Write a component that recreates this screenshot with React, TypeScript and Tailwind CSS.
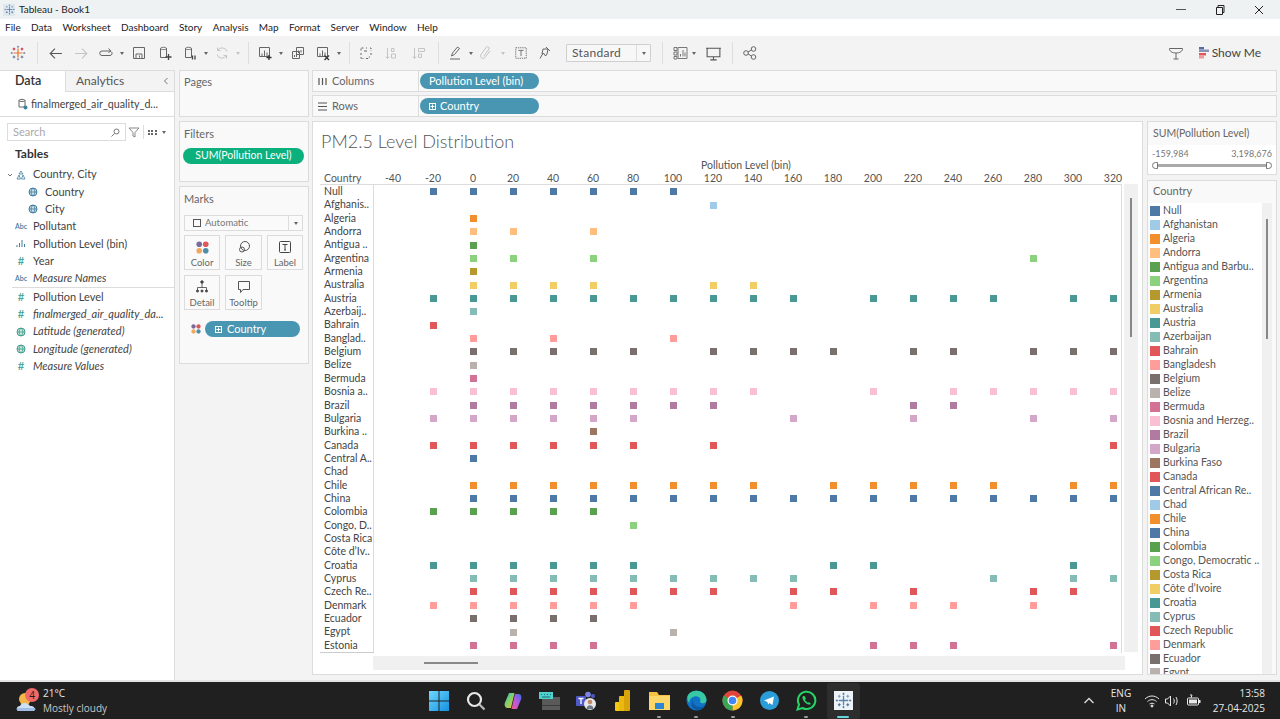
import React from "react";

const C = {
  blue: "#4e79a7", lblue: "#a0cbe8", orange: "#f28e2b", lorange: "#ffbe7d", green: "#59a14f", lgreen: "#8cd17d",
  olive: "#b6992d", yellow: "#f1ce63", teal: "#499894", lteal: "#86bcb6", red: "#e15759", pink: "#ff9d9a",
  gray: "#79706e", lgray: "#bab0ac", rose: "#d37295", lrose: "#fabfd2", purple: "#b07aa1", lpurple: "#d4a6c8", brown: "#9d7660",
};

const rows: [string, string, string, number[]][] = [
  ["Null", "Null", C.blue, [-20, 0, 20, 40, 60, 80, 100]],
  ["Afghanis..", "Afghanistan", C.lblue, [120]],
  ["Algeria", "Algeria", C.orange, [0]],
  ["Andorra", "Andorra", C.lorange, [0, 20, 60]],
  ["Antigua ..", "Antigua and Barbu..", C.green, [0]],
  ["Argentina", "Argentina", C.lgreen, [0, 20, 60, 280]],
  ["Armenia", "Armenia", C.olive, [0]],
  ["Australia", "Australia", C.yellow, [0, 20, 40, 60, 120, 140]],
  ["Austria", "Austria", C.teal, [-20, 0, 20, 40, 60, 80, 100, 120, 140, 160, 200, 220, 240, 260, 300, 320]],
  ["Azerbaij..", "Azerbaijan", C.lteal, [0]],
  ["Bahrain", "Bahrain", C.red, [-20]],
  ["Banglad..", "Bangladesh", C.pink, [0, 40, 100]],
  ["Belgium", "Belgium", C.gray, [0, 20, 40, 60, 80, 120, 140, 160, 180, 220, 240, 280, 300, 320]],
  ["Belize", "Belize", C.lgray, [0]],
  ["Bermuda", "Bermuda", C.rose, [0]],
  ["Bosnia a..", "Bosnia and Herzeg..", C.lrose, [-20, 0, 20, 40, 60, 80, 100, 120, 140, 200, 240, 260, 280, 300, 320]],
  ["Brazil", "Brazil", C.purple, [0, 20, 40, 60, 80, 100, 120, 220, 240]],
  ["Bulgaria", "Bulgaria", C.lpurple, [-20, 0, 20, 40, 60, 80, 160, 220, 280, 320]],
  ["Burkina ..", "Burkina Faso", C.brown, [60]],
  ["Canada", "Canada", C.red, [-20, 0, 20, 40, 60, 80, 120, 320]],
  ["Central A..", "Central African Re..", C.blue, [0]],
  ["Chad", "Chad", C.lblue, []],
  ["Chile", "Chile", C.orange, [0, 20, 40, 60, 80, 100, 120, 140, 180, 200, 220, 240, 260, 300, 320]],
  ["China", "China", C.blue, [0, 20, 40, 60, 80, 100, 120, 140, 160, 180, 200, 220, 240, 260, 280, 300, 320]],
  ["Colombia", "Colombia", C.green, [-20, 0, 20, 40, 60]],
  ["Congo, D..", "Congo, Democratic ..", C.lgreen, [80]],
  ["Costa Rica", "Costa Rica", C.olive, []],
  ["Côte d’Iv..", "Côte d’Ivoire", C.yellow, []],
  ["Croatia", "Croatia", C.teal, [-20, 0, 20, 40, 60, 80, 180, 200, 300]],
  ["Cyprus", "Cyprus", C.lteal, [0, 20, 40, 60, 80, 100, 120, 140, 160, 260, 300, 320]],
  ["Czech Re..", "Czech Republic", C.red, [0, 20, 40, 60, 80, 100, 120, 160, 180, 220, 280, 300]],
  ["Denmark", "Denmark", C.pink, [-20, 0, 20, 40, 60, 80, 160, 200, 220, 240, 280]],
  ["Ecuador", "Ecuador", C.gray, [0, 20, 40, 60]],
  ["Egypt", "Egypt", C.lgray, [20, 100]],
  ["Estonia", "Estonia", C.rose, [0, 20, 40, 60, 200, 220, 240, 320]],
];
const ticks = Array.from({ length: 19 }, (_, i) => -40 + i * 20);

const Ic = ({ children, s = 16, c = "#666" }: { children: React.ReactNode; s?: number; c?: string }) => (
  <svg width={s} height={s} viewBox="0 0 16 16" fill="none" stroke={c} strokeWidth="1">{children}</svg>
);
const Caret = ({ w = "w-[8px]", c = "border-t-[#666]" }: { w?: string; c?: string }) => (
  <div className={`${w} flex justify-center`}>
    <div className={`w-0 h-0 border-l-[2.5px] border-r-[2.5px] border-t-[3px] border-l-transparent border-r-transparent ${c}`} />
  </div>
);
const Sep = ({ m }: { m: string }) => <div className={`w-px h-[22px] bg-[#dddddd] ${m}`} />;
const Slot = ({ w, children, m = "" }: { w: string; children: React.ReactNode; m?: string }) => (
  <div className={`${w} ${m} flex justify-center items-center`}>{children}</div>
);

const TabLogo = ({ s = 18, mono = false }: { s?: number; mono?: boolean }) => {
  const a = mono ? "#5b84b1" : "#e8762d";
  const b = mono ? "#3f6c9a" : "#5b6f9b";
  const d = mono ? "#7a9cc0" : "#c72037";
  return (
    <svg width={s} height={s} viewBox="0 0 18 18" fill="none" strokeWidth="1.1">
      <path d="M9 4v10M4 9h10" stroke={a} strokeWidth="1.400" />
      <path d="M4.500 3v3M3 4.500h3M13.500 3v3M12 4.500h3" stroke={d} />
      <path d="M4.500 12v3M3 13.500h3M13.500 12v3M12 13.500h3" stroke={b} />
      <path d="M9 .8v2.400M7.800 2h2.400M9 14.800v2.400M7.800 16h2.400M.8 9h2.400M2 7.800v2.400M14.800 9h2.400M16 7.800v2.400" stroke={b} strokeWidth=".8" />
    </svg>
  );
};

const Db = ({ extra }: { extra: React.ReactNode }) => (
  <Ic>
    <path d="M3.500 3.500c0-1.600 6-1.600 6 0v9h-6zM3.500 3.500c0 1.400 6 1.400 6 0" />
    {extra}
  </Ic>
);

function Toolbar() {
  const g = "#c4c4c4";
  return (
    <div className="h-[34px] bg-[#f3f3f3] flex items-center pl-[6px]">
      <Slot w="w-[24px]"><TabLogo s={16} /></Slot>
      <Sep m="ml-[7px]" />
      <Slot w="w-[26px]" m="ml-[4px]"><Ic s={17}><path d="M14 8H3M7.500 3.500 3 8l4.500 4.500" stroke="#555" /></Ic></Slot>
      <Slot w="w-[26px]"><Ic s={17} c={g}><path d="M2 8h11M8.500 3.500 13 8l-4.500 4.500" /></Ic></Slot>
      <Slot w="w-[24px]"><Ic><path d="M13 6H4a2.200 2.200 0 0 0 0 4.500h8a2.200 2.200 0 0 0 1.500-3.700M10.500 3.500 13 6l-2.500 1.500" /></Ic></Slot>
      <Caret />
      <Slot w="w-[26px]"><Ic><path d="M2.500 2.500h11v11h-11zM5 13.500V9h6v4.500M8.500 10.500v2" /></Ic></Slot>
      <Slot w="w-[26px]"><Db extra={<path d="M11.500 9v6M8.500 12h6" stroke="#444" strokeWidth="1.300" />} /></Slot>
      <Slot w="w-[24px]"><Db extra={<path d="M10.500 10.500v4M13 10.500v4" stroke="#444" strokeWidth="1.300" />} /></Slot>
      <Caret />
      <Slot w="w-[24px]"><Ic c={g}><path d="M13 6.500A5.200 5.200 0 0 0 3.500 5.500M3 9.500a5.200 5.200 0 0 0 9.500 1M3.500 2.500v3h3M12.500 13.500v-3h-3" /></Ic></Slot>
      <Caret c="border-t-[#c4c4c4]" />
      <Sep m="ml-[6px]" />
      <Slot w="w-[24px]" m="ml-[4px]"><Ic><path d="M2.500 2.500h10v9h-10zM5 11.500v-3M7.500 11.500v-6M10 11.500v-4" /><path d="M12 10v5M9.500 12.500h5" stroke="#333" strokeWidth="1.300" /></Ic></Slot>
      <Caret />
      <Slot w="w-[26px]"><Ic><path d="M6.500 2.500h7v7h-7zM2.500 6.500h7v7h-7zM4.500 12v-2M6.500 12V8.500M8.500 8V5.500M11 7.500V5" /></Ic></Slot>
      <Slot w="w-[24px]"><Ic><path d="M2.500 2.500h10v9h-10zM5 11.500v-3M7.500 11.500v-6M10 11.500v-4" /><path d="m9.500 10.500 4.500 4.500m0-4.500-4.500 4.500" stroke="#333" strokeWidth="1.300" /></Ic></Slot>
      <Caret />
      <Sep m="ml-[6px]" />
      <Slot w="w-[32px]"><Ic><path d="M3 5.500v-2.500h2.500M8 3h1M12 3h1v2.500M13 8v2M3 8v2M3 12v1.500h2.500M8 13.500h2l2-2" strokeDasharray="2 1" /><path d="M6 6h3" /></Ic></Slot>
      <Slot w="w-[20px]"><Ic c={g}><path d="M3.500 3v10M1.800 11.500 3.500 13.500l1.700-2M7.500 3.500h2.500v3h-2.500zM7.500 9h4v4h-4z" /></Ic></Slot>
      <Slot w="w-[34px]"><Ic c={g}><path d="M3.500 3v10M1.800 11.500 3.500 13.500l1.700-2M7.500 3.500h6v3h-6zM7.500 9h3v3.500h-3z" /></Ic></Slot>
      <Sep m="ml-[2px]" />
      <Slot w="w-[24px]" m="ml-[4px]"><Ic><path d="m4.500 11 1-3 5-6 2 1.500-5 6zM3 14h10" /></Ic></Slot>
      <Caret w="w-[7px]" />
      <Slot w="w-[24px]"><Ic c={g}><path d="M5.500 11.500 11 4a1.700 1.700 0 0 0-2.600-2L3 9.500a2.500 2.500 0 0 0 4 3L12 6" /></Ic></Slot>
      <Caret w="w-[10px]" c="border-t-[#c4c4c4]" />
      <Slot w="w-[26px]"><Ic s={14}><path d="M2 2h12v12H2z" strokeDasharray="1.500 1" /><path d="M5 5h6M8 5v6.500" /></Ic></Slot>
      <Slot w="w-[22px]"><Ic><path d="m5 9 1-5h5l-1 5-1.500 2L7 8.500zM9 2l4 4M5.500 9 3 13.500" /></Ic></Slot>
      <div className="ml-[10px] w-[85px] h-[18px] bg-[#f7f7f7] border border-[#cfcfcf] flex items-center justify-between text-[#555] text-[12px] tracking-[0.3px] rounded-[1px]">
        <span className="pl-[5px]">Standard</span>
        <div className="w-[14px] h-full border-l border-[#dddddd] flex items-center justify-center"><Caret /></div>
      </div>
      <Sep m="ml-[11px]" />
      <Slot w="w-[22px]" m="ml-[6px]"><Ic><path d="M2 2.500h3v3H2zM2 7h3v3H2zM2 11.500h3v2.500H2zM6 2.500h9v11H6zM8.500 11.500V9M11 11.500V5M13 11.500V7.500" stroke="#777" /></Ic></Slot>
      <Caret w="w-[6px]" />
      <Slot w="w-[32px]"><Ic s={17}><path d="M2 3h12v8H2zM1 3h14M8 11v3M5 14h6" stroke="#555" /></Ic></Slot>
      <Sep m="ml-[3px]" />
      <Slot w="w-[34px]"><Ic><circle cx="4" cy="8" r="2.300" /><circle cx="11.500" cy="4" r="2.300" /><circle cx="11.500" cy="12" r="2.300" /><path d="m6 7 3.500-2M6 9l3.500 2" /></Ic></Slot>
      <div className="flex-1" />
      <Ic s={16}><path d="M1.500 3.500h13c.3 2.500-2.500 4.500-6.500 4.500s-6.800-2-6.500-4.500zM8 8v6M5.500 14h5" stroke="#666" /></Ic>
      <div className="ml-[15px] flex items-center mr-[19px]">
        <svg width="11" height="12" viewBox="0 0 11 12" className="mr-[2px]">
          <rect x="0" y="0" width="5" height="2.500" fill="#5a6b9d" />
          <rect x="0" y="2.500" width="10" height="2.500" fill="#8a93b8" />
          <rect x="0" y="6" width="7" height="2.500" fill="#e15759" />
          <rect x="0" y="9" width="5" height="2.500" fill="#ef9a9a" />
        </svg>
        <span className="text-[12px] text-[#444]">Show Me</span>
      </div>
    </div>
  );
}

const DType = ({ t }: { t: string }) => {
  if (t === "abc") return <span className="text-[7px] text-[#3f7f9f] font-semibold">Abc</span>;
  if (t === "hash") return <span className="text-[12px] leading-none text-[#3f9f8c]">#</span>;
  if (t === "bin")
    return (
      <svg width="10" height="9" viewBox="0 0 10 9"><path d="M1 8V6M3.500 8V4M6 8V1M8.500 8V5" stroke="#3f7f9f" /></svg>
    );
  const c = t === "globeg" ? "#3f9f8c" : "#3f7f9f";
  return (
    <svg width="10" height="10" viewBox="0 0 10 10" fill="none" stroke={c}>
      <circle cx="5" cy="5" r="4" fill={c} fillOpacity=".25" />
      <path d="M1 5h8M5 1c-2.500 2.500-2.500 5.500 0 8M5 1c2.500 2.500 2.500 5.500 0 8" strokeWidth=".8" />
    </svg>
  );
};

const Field = ({ t, label, italic, sub }: { t: string; label: string; italic?: boolean; sub?: boolean }) => (
  <div className={`h-[17.33px] flex items-center ${sub ? "pl-[28px]" : "pl-[16px]"}`}>
    <div className={`w-[10px] flex justify-center`}><DType t={t} /></div>
    <span className={`ml-[7px] whitespace-nowrap ${italic ? "italic" : ""}`}>{label}</span>
  </div>
);

function DataPane() {
  return (
    <div className="w-[175px] h-full bg-white border-r border-[#dcdcdc] text-[11px] text-[#444] flex flex-col shrink-0 border-t border-t-[#dcdcdc]">
      <div className="h-[21px] flex text-[12px] shrink-0">
        <div className="w-[65px] flex items-center pl-[15px] font-semibold text-[#333] text-[12.5px]">Data</div>
        <div className="flex-1 bg-[#f3f3f3] border-b border-l border-[#dcdcdc] flex items-center pl-[10px] text-[#555] justify-between pr-[5px]">
          <span>Analytics</span>
          <svg width="6" height="8" viewBox="0 0 6 8" fill="none" stroke="#777"><path d="M4.500 1 1.500 4l3 3" /></svg>
        </div>
      </div>
      <div className="h-[25px] flex items-center pl-[18px] border-b border-[#dcdcdc] shrink-0 gap-[3px]">
        <svg width="10" height="12" viewBox="0 0 10 12" fill="none" stroke="#666">
          <path d="M1 2.500c0-1.500 6-1.500 6 0V9H1zM1 2.500c0 1.300 6 1.300 6 0" />
          <circle cx="7.500" cy="9.500" r="2" fill="#3f7f9f" stroke="none" />
        </svg>
        <span className="text-[10.7px]">finalmerged_air_quality_d...</span>
      </div>
      <div className="flex items-center h-[18px] mt-[6px] ml-[7px] shrink-0">
        <div className="w-[119px] h-full border border-[#dcdcdc] flex items-center justify-between px-[5px] text-[#aaa]">
          <span>Search</span>
          <svg width="9" height="9" viewBox="0 0 9 9" fill="none" stroke="#777"><circle cx="5.500" cy="3.500" r="2.500" /><path d="m3.500 5.500-3 3" /></svg>
        </div>
        <svg width="12" height="11" viewBox="0 0 12 11" fill="none" stroke="#888" className="ml-[2px]"><path d="M1 1h10L7 5.500V10L5 9V5.500z" /></svg>
        <div className="w-px h-[14px] bg-[#dddddd] ml-[3px]" />
        <div className="ml-[4px] grid grid-cols-3 gap-[1px] w-[9px]">
          {Array.from({ length: 6 }, (_, i) => <div key={i} className="w-[2px] h-[2px] bg-[#666]" />)}
        </div>
        <div className="ml-[4px]"><Caret w="w-[6px]" /></div>
      </div>
      <div className="mt-[4px] pl-[15px] text-[12px] font-bold text-[#333] h-[17px] flex items-center shrink-0">Tables</div>
      <div className="mt-[4px]">
        <div className="h-[17.33px] flex items-center pl-[7px]">
          <svg width="6" height="6" viewBox="0 0 6 6" fill="none" stroke="#777"><path d="m1 2 2 2 2-2" /></svg>
          <svg width="10" height="10" viewBox="0 0 10 10" fill="none" stroke="#3f7f9f" className="ml-[3px]"><path d="M5 1 3 4h4zM3 5 1 9h3.500zM7 5l2 4H5.500z" strokeWidth=".8" /></svg>
          <span className="ml-[7px]">Country, City</span>
        </div>
        <Field t="globe" label="Country" sub />
        <Field t="globe" label="City" sub />
        <Field t="abc" label="Pollutant" />
        <Field t="bin" label="Pollution Level (bin)" />
        <Field t="hash" label="Year" />
        <Field t="abc" label="Measure Names" italic />
      </div>
      <div className="h-px bg-[#dcdcdc] ml-[12px] shrink-0" />
      <Field t="hash" label="Pollution Level" />
      <Field t="hash" label="finalmerged_air_quality_da..." italic />
      <Field t="globeg" label="Latitude (generated)" italic />
      <Field t="globeg" label="Longitude (generated)" italic />
      <Field t="hash" label="Measure Values" italic />
    </div>
  );
}

const Dots = ({ s = 12 }: { s?: number }) => (
  <svg width={s} height={s} viewBox="0 0 12 12">
    <circle cx="3" cy="3" r="2.600" fill="#7b6a9c" />
    <circle cx="9" cy="3" r="2.600" fill="#e15759" />
    <circle cx="3" cy="9" r="2.600" fill="#f2a65e" />
    <circle cx="9" cy="9" r="2.600" fill="#4e8fa7" />
  </svg>
);

const MarkBtn = ({ label, children }: { label: string; children: React.ReactNode }) => (
  <div className="h-[35px] border border-[#dcdcdc] bg-[#fafafa] flex flex-col items-center pt-[4px] text-[#666] text-[9.5px] gap-[3px]">
    <div className="h-[14px] flex items-center">{children}</div>
    <span className="leading-[12px]">{label}</span>
  </div>
);

const Plus = () => (
  <div className="w-[7px] h-[7px] border border-white flex items-center justify-center text-white text-[7px] leading-none">
    <svg width="5" height="5" viewBox="0 0 5 5" stroke="#fff" strokeWidth="1"><path d="M2.500 .5v4M.5 2.500h4" /></svg>
  </div>
);

function Middle() {
  const card = "bg-[#f9f9f9] border border-[#dcdcdc] px-[4px] text-[11px] text-[#666]";
  return (
    <div className="w-[130px] h-full ml-[4px] flex flex-col gap-[4px] shrink-0">
      <div className={`${card} h-[47px] pt-[3px]`}>Pages</div>
      <div className={`${card} h-[61px] pt-[4px]`}>
        <div className="h-[13px]">Filters</div>
        <div className="mt-[9px] -ml-[1px] h-[16px] w-[121px] rounded-full bg-[#0bb07d] text-white flex items-center justify-center text-[10.5px]">SUM(Pollution Level)</div>
      </div>
      <div className={`${card} h-[178px] pt-[4px]`}>
        <div className="h-[13px]">Marks</div>
        <div className="mt-[11px] h-[16px] w-[119px] border border-[#dcdcdc] bg-[#fafafa] flex items-center text-[9.5px]">
          <div className="w-[8px] h-[8px] border border-[#555] ml-[8px]" />
          <span className="ml-[4px] flex-1 text-[#777]">Automatic</span>
          <div className="w-[14px] h-full border-l border-[#dcdcdc] flex items-center justify-center"><Caret w="w-[6px]" /></div>
        </div>
        <div className="mt-[4px] grid grid-cols-[36px_37px_36px] gap-x-[5px] gap-y-[5px] w-[119px]">
          <MarkBtn label="Color"><Dots s={13} /></MarkBtn>
          <MarkBtn label="Size">
            <svg width="14" height="14" viewBox="0 0 14 14" fill="none" stroke="#555"><circle cx="8" cy="6" r="4.500" /><circle cx="5" cy="9.500" r="2.500" /></svg>
          </MarkBtn>
          <MarkBtn label="Label">
            <svg width="12" height="12" viewBox="0 0 12 12" fill="none" stroke="#444"><rect x=".5" y=".5" width="11" height="11" rx="1" /><path d="M3.500 3.500h5M6 3.500v5.500M5 9h2" /></svg>
          </MarkBtn>
          <MarkBtn label="Detail">
            <svg width="14" height="14" viewBox="0 0 14 14" fill="#444" stroke="#444" strokeWidth=".8"><circle cx="7" cy="2" r="1.300" /><path d="M7 3v5M2.500 10V7.500h9V10" fill="none" /><circle cx="2.500" cy="11" r="1.100" /><circle cx="7" cy="11" r="1.100" /><circle cx="11.500" cy="11" r="1.100" /></svg>
          </MarkBtn>
          <MarkBtn label="Tooltip">
            <svg width="14" height="14" viewBox="0 0 14 14" fill="none" stroke="#555"><path d="M1.500 1.500h11v8H6l-2.500 3v-3h-2z" /></svg>
          </MarkBtn>
        </div>
        <div className="mt-[11px] flex items-center">
          <div className="ml-[7px]"><Dots s={10} /></div>
          <div className="ml-[4px] w-[95px] h-[16px] rounded-full bg-[#4996b2] text-white flex items-center pl-[10px] gap-[4px] text-[11px]">
            <Plus /><span className="ml-[1px]">Country</span>
          </div>
        </div>
      </div>
    </div>
  );
}

const Shelf = ({ icon, label, pill }: { icon: React.ReactNode; label: string; pill: React.ReactNode }) => (
  <div className="h-[22px] bg-[#f9f9f9] border border-[#dcdcdc] flex items-center text-[11px] text-[#666]">
    <div className="w-[106px] h-full border-r border-[#dcdcdc] flex items-center pl-[5px] gap-[5px] shrink-0">
      {icon}<span>{label}</span>
    </div>
    <div className="ml-[1px] w-[119px] h-[16px] rounded-full bg-[#4996b2] text-white flex items-center pl-[9px] text-[11px]">{pill}</div>
  </div>
);

function Chart() {
  return (
    <div className="w-[831px] h-[554px] bg-white border border-[#dcdcdc] pl-[7px] flex flex-col overflow-hidden shrink-0 text-[#555]">
      <div className="h-[37px] pt-[7px] pl-[1px] text-[18px] leading-[24px] font-light text-[#555] shrink-0">PM2.5 Level Distribution</div>
      <div className="h-[12px] text-[10.5px] leading-[12px] text-[#555] shrink-0 pl-[381px]">Pollution Level (bin)</div>
      <div className="flex h-[13px] text-[10.5px] shrink-0 w-[820px] overflow-hidden">
        <div className="w-[53px] pl-[4px] shrink-0 leading-[14px]">Country</div>
        <div className="grid grid-cols-[repeat(19,40px)] shrink-0">
          {ticks.map((t) => <div key={t} className="text-center leading-[14px]">{t}</div>)}
        </div>
      </div>
      <div className="flex shrink-0">
        <div className="w-[802px] border-t border-[#dcdcdc] border-r overflow-hidden shrink-0">
          {rows.map(([s, , color, vals]) => (
            <div key={s} className="flex h-[13.35px]">
              <div className="w-[54px] shrink-0 pl-[4px] border-r border-[#dcdcdc] text-[10.5px] leading-[13.35px] whitespace-nowrap text-[#444] overflow-hidden">{s}</div>
              <div className="grid grid-cols-[repeat(19,40px)] shrink-0 -ml-[1px]">
                {ticks.map((t) => (
                  <div key={t} className="flex items-center justify-center">
                    {vals.includes(t) && <div className="w-[7px] h-[7px]" style={{ backgroundColor: color }} />}
                  </div>
                ))}
              </div>
            </div>
          ))}
          <div className="w-[54px] h-px bg-[#cccccc]" />
        </div>
        <div className="ml-[2px] w-[14px] bg-[#f0f0f0] flex justify-center pt-[14px] mb-[1px]">
          <div className="w-[2px] h-[139px] bg-[#888]" />
        </div>
      </div>
      <div className="ml-[53px] mt-[3px] w-[752px] h-[14px] bg-[#f0f0f0] flex items-center pl-[51px] shrink-0">
        <div className="w-[54px] h-[2px] bg-[#888]" />
      </div>
    </div>
  );
}

function Legend() {
  return (
    <div className="w-[130px] h-full flex flex-col gap-[5px] shrink-0 text-[11px] text-[#666]">
      <div className="h-[54px] bg-[#f9f9f9] border border-[#dcdcdc] shrink-0">
        <div className="h-[23px] pl-[5px] pt-[4px] text-[10.5px]">SUM(Pollution Level)</div>
        <div className="bg-white h-[29px]">
          <div className="flex justify-between px-[4px] text-[9px] text-[#777] pt-[2px]"><span>-159,984</span><span>3,198,676</span></div>
          <div className="flex items-center mx-[4px] mt-[1px]">
            <div className="w-[6px] h-[7px] border border-[#777] rounded-l-full bg-white" />
            <div className="flex-1 h-[3px] bg-[#aaaaaa]" />
            <div className="w-[6px] h-[7px] border border-[#777] rounded-r-full bg-white" />
          </div>
        </div>
      </div>
      <div className="h-[495px] bg-[#f9f9f9] border border-[#dcdcdc] overflow-hidden shrink-0 flex flex-col">
        <div className="h-[22px] pl-[5px] pt-[2px] shrink-0">Country</div>
        <div className="flex flex-1 overflow-hidden">
          <div className="w-[113px] ml-[1px] bg-white overflow-hidden shrink-0 pt-[1px]">
            {rows.map(([s, full, color]) => (
              <div key={s} className="h-[14px] flex items-center shrink-0 pl-[1px]">
                <div className="w-[10px] h-[10px] shrink-0" style={{ backgroundColor: color }} />
                <span className="ml-[3px] whitespace-nowrap text-[10.5px] text-[#555]">{full}</span>
              </div>
            ))}
          </div>
          <div className="w-[10px] bg-[#f0f0f0] flex justify-center pt-[16px]">
            <div className="w-[2px] h-[120px] bg-[#888]" />
          </div>
        </div>
      </div>
    </div>
  );
}

function TaskIcons() {
  const items: React.ReactNode[] = [
    <svg key="w" width="20" height="20" viewBox="0 0 20 20"><defs><linearGradient id="wg" x1="0" y1="0" x2="1" y2="1"><stop offset="0" stopColor="#6fd8ff" /><stop offset="1" stopColor="#1490e0" /></linearGradient></defs><path d="M0 0h9.500v9.500H0zM10.500 0H20v9.500h-9.500zM0 10.500h9.500V20H0zM10.500 10.500H20V20h-9.500z" fill="url(#wg)" /></svg>,
    <svg key="s" width="20" height="20" viewBox="0 0 20 20" fill="none" stroke="#e8e8e8" strokeWidth="2.200"><circle cx="8.500" cy="8.500" r="6.500" /><path d="m13.500 13.500 5 5" stroke="#bbb" /></svg>,
    <svg key="c" width="20" height="20" viewBox="0 0 20 20"><defs><linearGradient id="cg" x1="0" y1="0" x2="1" y2="1"><stop offset="0" stopColor="#2fa8e8" /><stop offset=".45" stopColor="#7ed36a" /><stop offset="1" stopColor="#f5b53a" /></linearGradient><linearGradient id="cg2" x1="1" y1="0" x2="0" y2="1"><stop offset="0" stopColor="#3a6ce8" /><stop offset=".5" stopColor="#b85ae0" /><stop offset="1" stopColor="#f0588a" /></linearGradient></defs><path d="M6 2h5.500L8 17H4.500C2 17 1 14 2 11.500z" fill="url(#cg)" /><path d="M14 18H8.500L12 3h3.500c2.500 0 3.500 3 2.500 5.500z" fill="url(#cg2)" /></svg>,
    <svg key="k" width="21" height="18" viewBox="0 0 21 18"><rect x="3" y="5" width="18" height="13" fill="#5a5a5a" /><rect x="0" y="0" width="14" height="7" fill="#4ed1cf" /><path d="M2 2.500h1M5 2.500h1M8 2.500h1M11 2.500h1M3 5h8" stroke="#1b6a6a" /><rect x="3" y="13" width="18" height="1" fill="#3a3a3a" /></svg>,
    <svg key="t" width="21" height="20" viewBox="0 0 21 20"><circle cx="12" cy="3.500" r="2.800" fill="#7b83eb" /><circle cx="17" cy="5" r="2" fill="#5059c9" /><rect x="0" y="5" width="10" height="10" rx="1" fill="#5059c9" /><path d="M2.500 7.500h5M5 7.500v5.500" stroke="#fff" strokeWidth="1.300" /><circle cx="14" cy="13" r="6" fill="#e8e8e8" /><circle cx="14" cy="11" r="2.300" fill="#c08a6a" /><path d="M10.500 18c0-5 7-5 7 0z" fill="#6a7a8a" /></svg>,
    <svg key="p" width="15" height="21" viewBox="0 0 15 21"><rect x="0" y="12" width="5" height="9" rx="1" fill="#f2c811" /><rect x="4" y="6" width="6" height="15" rx="1" fill="#e9b911" /><rect x="9" y="0" width="6" height="21" rx="1" fill="#d9a30a" /></svg>,
    <svg key="f" width="21" height="18" viewBox="0 0 21 18"><path d="M0 0h8l2 3h11v14H0z" fill="#f5c242" /><rect x="0" y="4" width="21" height="14" fill="#fbd668" /><rect x="6" y="11" width="9" height="6" fill="#2b86d6" /></svg>,
    <svg key="e" width="21" height="21" viewBox="0 0 21 21"><circle cx="10.500" cy="10.500" r="10" fill="#1173c8" /><path d="M2 5C7-2 20 0 20.500 10c0 4-5 4-6.500 2 2-4-3-7-7-5C4 8.500 3 11 3.500 13 1 11 1 7 2 5z" fill="#37c9a4" /><path d="M7 10c-1 5 5 9 12 6-3 5-9 5-12 2-2-2-2-5 0-8z" fill="#0c59a4" /></svg>,
    <svg key="ch" width="21" height="21" viewBox="0 0 21 21"><circle cx="10.500" cy="10.500" r="10" fill="#e0453a" /><path d="M10.500 10.500 1.800 15.500a10 10 0 0 0 9 5z" fill="#3aa757" /><path d="M10.500 10.500l8.700-5a10 10 0 0 1-8.400 15z" fill="#f8c52c" /><path d="M1.800 15.500 10.500 10.500l-8.700-5a10 10 0 0 0 0 10z" fill="#3aa757" /><circle cx="10.500" cy="10.500" r="5" fill="#fff" /><circle cx="10.500" cy="10.500" r="3.800" fill="#4285f4" /></svg>,
    <svg key="tg" width="19" height="19" viewBox="0 0 19 19"><circle cx="9.500" cy="9.500" r="9.500" fill="#2a9dd8" /><path d="M4 9.500 14 5.500l-1.500 8.500-3-2-1.500 1.500-.5-2.500z" fill="#fff" /></svg>,
    <svg key="wa" width="21" height="21" viewBox="0 0 21 21" fill="none"><path d="M1.500 19.500 3 14.500A8.700 8.700 0 1 1 6.500 18z" stroke="#25d366" strokeWidth="2" /><path d="M7 6c-1.500 2 .5 5 2 6.500s4.500 3 6 1.500l-2-2-1 .8c-1-.3-2.500-1.800-3-3l1-1-1.500-2.800z" fill="#25d366" /></svg>,
  ];
  return (
    <div className="flex items-center h-full">
      {items.map((n, i) => (
        <div key={i} className="w-[36.7px] h-full flex items-center justify-center relative">
          {n}
          {i >= 6 && i !== 9 && <div className="absolute bottom-[1px] w-[4px] h-[2px] rounded-full bg-[#9a9a9a]" />}
        </div>
      ))}
      <div className="w-[33px] h-[36px] bg-[#2d2d2d] rounded-[3px] flex items-center justify-center relative ml-[2px]">
        <div className="w-[19px] h-[19px] bg-[#eef3f7] flex items-center justify-center"><TabLogo s={17} mono /></div>
        <div className="absolute bottom-[1px] w-[12px] h-[2px] rounded-full bg-[#67d3dc]" />
      </div>
    </div>
  );
}

function Taskbar() {
  return (
    <div className="h-[39px] bg-[#202020] border-t-2 border-[#e4e4e4] flex items-center text-[#e8e8e8] font-['Open_Sans',sans-serif] shrink-0">
      <div className="w-[421px] flex items-center pl-[16px] shrink-0 h-full">
        <div className="relative w-[22px] h-[24px]">
          <svg width="22" height="24" viewBox="0 0 22 24" className="mt-[1px]">
            <circle cx="9" cy="9" r="6" fill="#f2b64a" />
            <path d="M3 21c-3 0-3-5 1-5 1-4 8-4 10 0 5-1 6 5 2 5z" fill="#cfe0f5" />
            <path d="M3 21c-2 0-3-2-2-3h18c1 1 0 3-2 3z" fill="#9fbde6" />
          </svg>
          <div className="absolute top-[-1px] left-[9px] w-[14px] h-[14px] rounded-full bg-[#f0696a] text-[#1d1d1d] text-[10px] leading-[14px] text-center">4</div>
        </div>
        <div className="ml-[5px] text-[10px] leading-[15px]">
          <div>21°C</div>
          <div className="text-[#c8c8c8]">Mostly cloudy</div>
        </div>
      </div>
      <TaskIcons />
      <div className="flex-1" />
      <svg width="12" height="8" viewBox="0 0 12 8" fill="none" stroke="#ddd" strokeWidth="1.300"><path d="m1.500 6 4.500-4.500L10.500 6" /></svg>
      <div className="ml-[14px] w-[24px] text-center text-[10px] leading-[15px]"><div>ENG</div><div>IN</div></div>
      <svg width="16" height="14" viewBox="0 0 16 14" fill="none" stroke="#e8e8e8" className="ml-[11px]"><path d="M1 5c4-4 10-4 14 0M3.500 7.500c3-2.500 6-2.500 9 0M5.500 10c1.500-1 3.500-1 5 0" /><circle cx="8" cy="12" r="1" fill="#e8e8e8" /></svg>
      <svg width="16" height="14" viewBox="0 0 16 14" fill="none" stroke="#e8e8e8" className="ml-[4px]"><path d="M1.500 5v4h2l3 3V2l-3 3zM9.500 4.500c1 1.500 1 3.500 0 5M12 3c1.500 2.500 1.500 5.500 0 8" /></svg>
      <svg width="15" height="14" viewBox="0 0 15 14" className="ml-[6px]"><rect x="1.500" y="4" width="11" height="7" rx="1" fill="none" stroke="#e8e8e8" /><rect x="3" y="5.500" width="8" height="4" fill="#e8e8e8" /><rect x="13" y="6" width="1.500" height="3" fill="#e8e8e8" /><path d="M4 1h2l-1 3" stroke="#e8e8e8" fill="none" /></svg>
      <div className="w-[64px] mr-[15px] text-right text-[10px] leading-[15px]"><div>13:58</div><div>27-04-2025</div></div>
    </div>
  );
}

export default function App() {
  return (
    <div className="w-[1280px] h-[719px] overflow-hidden flex flex-col bg-[#f3f3f3] font-['Lato','Noto_Sans',sans-serif]">
      <div className="h-[19px] bg-[#eff2f3] flex items-center shrink-0">
        <div className="ml-[3px] w-[12px] h-[12px] bg-[#dfe8ee] flex items-center justify-center"><TabLogo s={11} mono /></div>
        <span className="ml-[4px] text-[10px] text-[#222]">Tableau - Book1</span>
        <div className="flex-1" />
        <div className="w-[10px] h-px bg-[#555] mr-[29px]" />
        <svg width="10" height="10" viewBox="0 0 10 10" fill="none" stroke="#222" className="mr-[29px]"><path d="M1.500 2.500h6v7h-6zM3 2.500V.5h6v7H7.500" /></svg>
        <svg width="10" height="10" viewBox="0 0 10 10" fill="none" stroke="#222" className="mr-[16px]"><path d="m1 1 8 8M9 1 1 9" /></svg>
      </div>
      <div className="h-[17px] bg-white flex items-center pl-[5px] text-[10px] text-[#222] gap-[10.4px] shrink-0">
        {["File", "Data", "Worksheet", "Dashboard", "Story", "Analysis", "Map", "Format", "Server", "Window", "Help"].map((m) => (
          <span key={m}>{m}</span>
        ))}
      </div>
      <Toolbar />
      <div className="h-[610px] flex shrink-0">
        <DataPane />
        <Middle />
        <div className="ml-[3px] w-[965px] flex flex-col shrink-0">
          <div className="flex flex-col gap-[3px]">
            <Shelf
              label="Columns"
              icon={<svg width="9" height="9" viewBox="0 0 9 9" stroke="#555" strokeWidth="1.200"><path d="M1 1v7M4.500 1v7M8 1v7" /></svg>}
              pill={<span>Pollution Level (bin)</span>}
            />
            <Shelf
              label="Rows"
              icon={<svg width="9" height="9" viewBox="0 0 9 9" stroke="#555" strokeWidth="1.200"><path d="M0 1h9M0 4.500h9M0 8h9" /></svg>}
              pill={<div className="flex items-center gap-[4px]"><Plus /><span>Country</span></div>}
            />
          </div>
          <div className="mt-[4px] flex gap-[4px]">
            <Chart />
            <div className="h-[554px]"><Legend /></div>
          </div>
        </div>
      </div>
      <Taskbar />
    </div>
  );
}
